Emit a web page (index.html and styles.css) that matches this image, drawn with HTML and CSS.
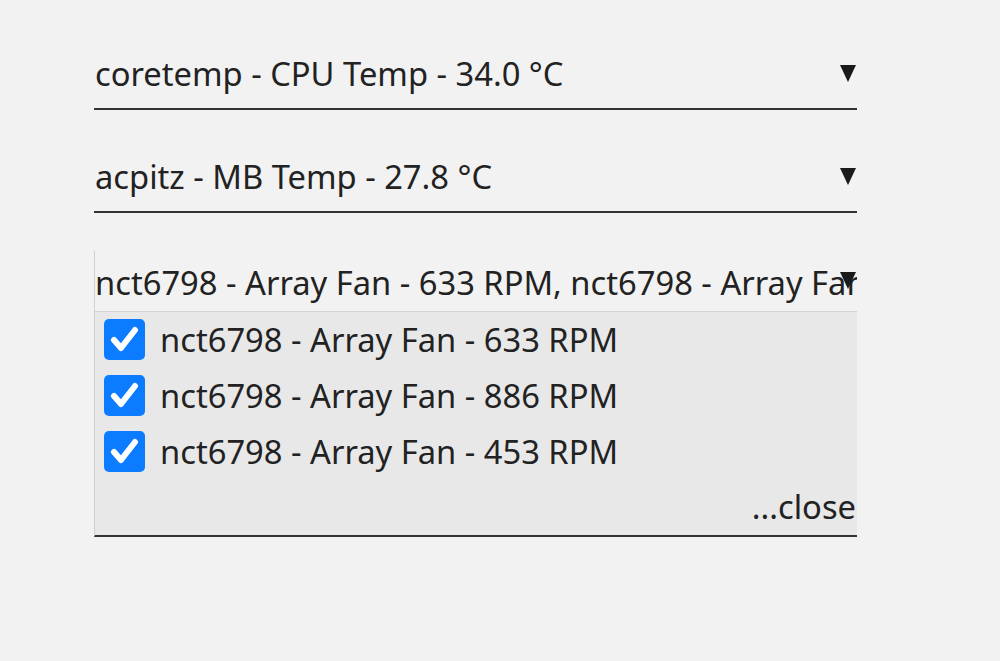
FILE: index.html
```html
<!DOCTYPE html>
<html lang="en">
<head>
  <meta charset="UTF-8" />
  <title>Sensors</title>
  <link rel="stylesheet" href="styles.css">
</head>
<body>
  <div class="sensors">
    <div class="select">
      <div class="select-head">
        <span class="select-value">coretemp - CPU Temp - 34.0 °C</span>
        <svg class="arrow" viewBox="0 0 16 17"><polygon points="0,0 16,0 8,17" /></svg>
      </div>
    </div>

    <div class="select">
      <div class="select-head">
        <span class="select-value">acpitz - MB Temp - 27.8 °C</span>
        <svg class="arrow" viewBox="0 0 16 17"><polygon points="0,0 16,0 8,17" /></svg>
      </div>
    </div>

    <div class="select open">
      <div class="select-head">
        <span class="select-value">nct6798 - Array Fan - 633 RPM, nct6798 - Array Fan - 886 RPM, nct6798 - Array Fan - 453 RPM</span>
        <svg class="arrow" viewBox="0 0 16 17"><polygon points="0,0 16,0 8,17" /></svg>
      </div>
      <div class="select-list">
        <label class="option">
          <span class="check"><svg viewBox="0 0 41 41"><path d="M10 21 L17 29 L31 11" /></svg></span>
          nct6798 - Array Fan - 633 RPM
        </label>
        <label class="option">
          <span class="check"><svg viewBox="0 0 41 41"><path d="M10 21 L17 29 L31 11" /></svg></span>
          nct6798 - Array Fan - 886 RPM
        </label>
        <label class="option">
          <span class="check"><svg viewBox="0 0 41 41"><path d="M10 21 L17 29 L31 11" /></svg></span>
          nct6798 - Array Fan - 453 RPM
        </label>
        <div class="close">...close</div>
      </div>
    </div>
  </div>
</body>
</html>
```
FILE: styles.css
```css
body {
  margin: 0;
  background: #f2f2f2;
  color: #222;
  font-family: "Noto Sans", sans-serif;
  font-size: 32.7px;
  line-height: 45px;
}
.sensors {
  width: 763px;
  margin-left: 94px;
  padding-top: 47px;
  display: flex;
  flex-direction: column;
  gap: 40px;
}
.select {
  border-bottom: 2px solid #333;
}
.select-head {
  position: relative;
  height: 61px;
  box-sizing: border-box;
  padding-top: 4px;
  overflow: hidden;
}
.select-value {
  display: block;
  white-space: nowrap;
  overflow: hidden;
  padding-left: 1px;
}
.arrow {
  position: absolute;
  right: 1px;
  top: 18px;
  width: 16px;
  height: 17px;
  fill: #1a1a1a;
}
.open {
  border-left: 1px solid #d0d0d0;
  margin-top: -2px;
}
.open .select-head {
  height: 60px;
  padding-top: 9px;
}
.open .select-value {
  padding-left: 0;
}
.open .arrow {
  top: 21px;
}
.select-list {
  background: #e8e8e8;
  border-top: 1px solid #d4d4d4;
  padding: 7px 0 0 9px;
  display: flex;
  flex-direction: column;
  gap: 15px;
}
.option {
  display: flex;
  align-items: center;
  gap: 15px;
  height: 41px;
  white-space: nowrap;
}
.check {
  width: 41px;
  height: 41px;
  border-radius: 5px;
  background: #0b7bff;
  flex-shrink: 0;
}
.check svg {
  display: block;
  width: 41px;
  height: 41px;
  fill: none;
  stroke: #fff;
  stroke-width: 6;
  stroke-linecap: round;
  stroke-linejoin: round;
}
.close {
  text-align: right;
  padding-right: 1px;
  margin-top: -3px;
  padding-bottom: 6px;
}
```
